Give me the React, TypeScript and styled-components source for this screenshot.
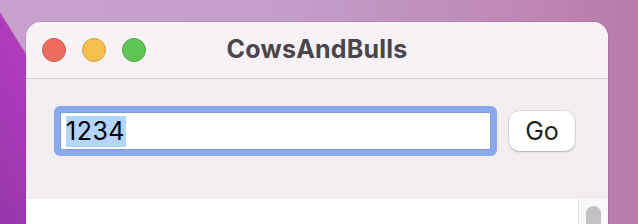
import React from "react";
import styled, { createGlobalStyle } from "styled-components";

const GlobalStyle = createGlobalStyle`
  html, body {
    margin: 0;
    padding: 0;
    width: 638px;
    height: 224px;
    overflow: hidden;
  }
  body {
    font-family: Inter, "Liberation Sans", sans-serif;
    background:
      linear-gradient(58deg, #9636ac 0%, #b23cbc 16.9%, rgba(196,160,204,0) 17.1%),
      linear-gradient(90deg, #c6a2cc 0%, #c29ec8 45%, #c088b6 80%, #b97aa8 100%);
  }
  #root {
    width: 638px;
    height: 224px;
  }
`;

const Desktop = styled.div`
  width: 638px;
  height: 224px;
  padding: 22px 30px 0 26px;
  box-sizing: border-box;
  overflow: hidden;
`;

const Window = styled.div`
  width: 582px;
  height: 230px;
  border-radius: 15px 15px 0 0;
  background: #f2edf1;
  overflow: hidden;
  display: flex;
  flex-direction: column;
  box-shadow: 0 0 0 0.5px rgba(90, 60, 90, 0.25);
`;

const TitleBar = styled.div`
  position: relative;
  height: 56px;
  flex: none;
  background: #f6f2f6;
  border-bottom: 1px solid #d6d1d6;
  display: flex;
  align-items: center;
  justify-content: center;
`;

const Lights = styled.div`
  position: absolute;
  left: 16px;
  top: 16px;
  display: flex;
  gap: 16px;
`;

const Light = styled.span<{ $fill: string; $edge: string }>`
  width: 24px;
  height: 24px;
  border-radius: 50%;
  box-sizing: border-box;
  background: ${(p) => p.$fill};
  border: 1px solid ${(p) => p.$edge};
`;

const Title = styled.div`
  font-size: 25px;
  font-weight: 700;
  color: #4a454a;
  letter-spacing: 0.2px;
  line-height: 1;
  margin-top: -2px;
`;

const Toolbar = styled.div`
  flex: none;
  display: flex;
  align-items: center;
  gap: 18px;
  padding: 32px 0 48px 34px;
`;

const Field = styled.div`
  width: 431px;
  height: 38px;
  box-sizing: border-box;
  background: #ffffff;
  border: 1px solid #7a9be2;
  border-radius: 2px;
  box-shadow: 0 0 0 6px #89a9ef;
  display: flex;
  align-items: center;
  padding-left: 5px;
`;

const Selected = styled.span`
  background: #b4d4fc;
  color: #000;
  font-size: 25px;
  line-height: 31px;
  font-family: Inter, "Liberation Sans", sans-serif;
  letter-spacing: 0.5px;
  padding-right: 1px;
`;

const GoButton = styled.button`
  width: 66px;
  height: 40px;
  border: none;
  border-radius: 10px;
  background: #ffffff;
  box-shadow: 0 1px 2px rgba(0, 0, 0, 0.22), 0 0 0 0.5px rgba(0, 0, 0, 0.12);
  font-family: Inter, "Liberation Sans", sans-serif;
  font-size: 25px;
  color: #1f1f1f;
  padding: 0;
  display: flex;
  align-items: center;
  justify-content: center;
`;

const ListArea = styled.div`
  flex: 1;
  display: flex;
`;

const List = styled.div`
  flex: 1;
  background: #ffffff;
  border-right: 1px solid #e6e3e6;
`;

const ScrollTrack = styled.div`
  width: 29px;
  background: #f9f8f9;
  padding: 7px 0 0 7px;
  box-sizing: border-box;
`;

const Thumb = styled.div`
  width: 15px;
  height: 60px;
  border-radius: 8px;
  background: #c2c2c2;
`;

export default function App() {
  return (
    <>
      <GlobalStyle />
      <Desktop>
        <Window>
          <TitleBar>
            <Lights>
              <Light $fill="#ed6b5f" $edge="#d65a4f" />
              <Light $fill="#f5bf4f" $edge="#d9a13c" />
              <Light $fill="#61c555" $edge="#4fa944" />
            </Lights>
            <Title>CowsAndBulls</Title>
          </TitleBar>
          <Toolbar>
            <Field>
              <Selected>1234</Selected>
            </Field>
            <GoButton>Go</GoButton>
          </Toolbar>
          <ListArea>
            <List />
            <ScrollTrack>
              <Thumb />
            </ScrollTrack>
          </ListArea>
        </Window>
      </Desktop>
    </>
  );
}
